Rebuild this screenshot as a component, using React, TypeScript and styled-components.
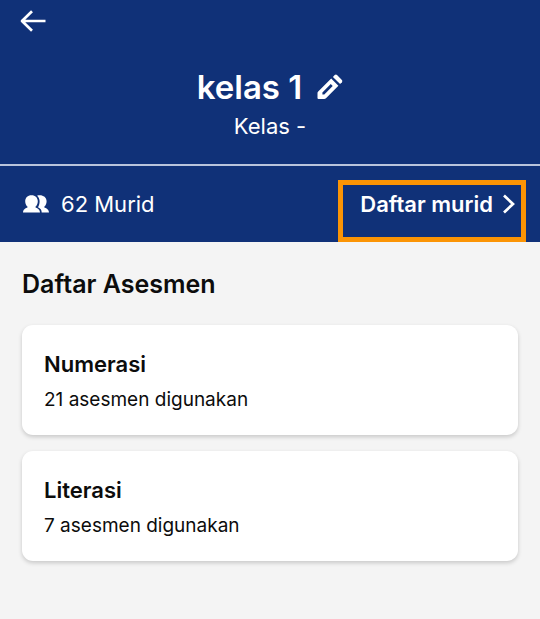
import React from "react";
import styled, { createGlobalStyle } from "styled-components";

const GlobalStyle = createGlobalStyle`
  *, *::before, *::after { box-sizing: border-box; }
  body {
    margin: 0;
    background: #f4f4f4;
    color: #0c0c0c;
    font-family: Inter, "Liberation Sans", sans-serif;
  }
`;

const Header = styled.header`
  background: #103178;
  color: #fff;
`;

const TopBar = styled.nav`
  display: flex;
  padding: 8px 20px 0;
`;

const IconButton = styled.button`
  display: flex;
  padding: 0;
  border: 0;
  background: none;
  color: inherit;
  cursor: pointer;
`;

const ClassInfo = styled.div`
  display: flex;
  flex-direction: column;
  align-items: center;
  padding: 33px 20px 24px;
  border-bottom: 2px solid #b9c4dc;
`;

const TitleRow = styled.div`
  display: flex;
  align-items: center;
  gap: 15px;
`;

const Title = styled.h1`
  margin: 0;
  font-size: 33px;
  font-weight: 600;
  line-height: 40px;
`;

const Subtitle = styled.p`
  margin: 5px 0 0;
  font-size: 22px;
  line-height: 28px;
`;

const StatsBar = styled.div`
  display: flex;
  align-items: flex-start;
  justify-content: space-between;
  padding: 14px 14px 0 23px;
`;

const StudentCount = styled.div`
  display: flex;
  align-items: center;
  gap: 12px;
  padding-top: 10px;
  font-size: 22px;
  line-height: 28px;
`;

const StudentLink = styled.a`
  display: flex;
  align-items: center;
  gap: 9px;
  padding: 5px 6px 19px 17px;
  border: 5px solid #fb9405;
  color: inherit;
  font-size: 22px;
  font-weight: 600;
  line-height: 28px;
  text-decoration: none;
`;

const Main = styled.main`
  padding: 26px 22px;
`;

const SectionTitle = styled.h2`
  margin: 0 0 25px;
  font-size: 25px;
  font-weight: 600;
  line-height: 32px;
`;

const CardList = styled.div`
  display: grid;
  gap: 16px;
`;

const Card = styled.section`
  padding: 24px 22px 22px;
  border-radius: 11px;
  background: #fff;
  box-shadow: 0 2px 4px rgba(0, 0, 0, 0.18);
`;

const CardTitle = styled.h3`
  margin: 0 0 8px;
  font-size: 22px;
  font-weight: 600;
  line-height: 30px;
`;

const CardText = styled.p`
  margin: 0;
  font-size: 19px;
  line-height: 26px;
`;

const BackIcon = () => (
  <svg width="26" height="26" viewBox="0 0 26 26" fill="none" stroke="currentColor" strokeWidth="2.7" strokeLinejoin="round" aria-hidden="true">
    <path d="M25.5 13H2M12 3.2 2 13l10 9.8" />
  </svg>
);

const PencilIcon = () => (
  <svg width="26" height="26" viewBox="0 0 26 26" fill="currentColor" aria-hidden="true">
    <path
      fillRule="evenodd"
      d="M14.200 4.600 21.400 11.800 9 24.200Q8.200 25 7.200 25H1.500Q.5 25 .5 24V18.800Q.5 18 1.200 17.400ZM13.800 10.100 5.400 18.500V20.400H7.300L15.700 12Z"
    />
    <path d="M15.900 2.900 17.700 1.100Q18.900.1 20 1.100L24.900 6Q25.900 7.100 24.900 8.300L23.100 10.100Z" />
  </svg>
);

const PeopleIcon = () => (
  <svg width="26" height="18" viewBox="0 0 26 18" fill="currentColor" aria-hidden="true">
    <path d="M8.500.3c3.900 0 6.300 2.600 6.300 6 0 2.500-1 4.500-2.600 5.700.3 1 4.800 1.300 4.800 5.600H0c0-4.300 4.500-4.600 4.800-5.600-1.600-1.200-2.600-3.200-2.600-5.700 0-3.400 2.400-6 6.300-6Z" />
    <path d="M14 .7c5-1.300 9.600 1 9.600 5.600 0 2.500-1 4.500-2.600 5.700.3 1 5 1.300 5 5.600h-7.300c0-2.700-1.300-4.300-3.700-5.400 1-1.400 1.600-3.500 1.600-5.900 0-2.400-.9-4.300-2.600-5.600Z" />
  </svg>
);

const ChevronIcon = () => (
  <svg width="13" height="20" viewBox="0 0 13 20" fill="none" stroke="currentColor" strokeWidth="2.7" aria-hidden="true">
    <path d="M2 1.5 11 10l-9 8.5" />
  </svg>
);

const assessments = [
  { name: "Numerasi", used: 21 },
  { name: "Literasi", used: 7 },
];

export default function App() {
  return (
    <>
      <GlobalStyle />
      <Header>
        <TopBar>
          <IconButton type="button" aria-label="Kembali">
            <BackIcon />
          </IconButton>
        </TopBar>
        <ClassInfo>
          <TitleRow>
            <Title>kelas 1</Title>
            <IconButton type="button" aria-label="Ubah nama kelas">
              <PencilIcon />
            </IconButton>
          </TitleRow>
          <Subtitle>Kelas -</Subtitle>
        </ClassInfo>
        <StatsBar>
          <StudentCount>
            <PeopleIcon />
            <span>62 Murid</span>
          </StudentCount>
          <StudentLink href="#murid">
            <span>Daftar murid</span>
            <ChevronIcon />
          </StudentLink>
        </StatsBar>
      </Header>
      <Main>
        <SectionTitle>Daftar Asesmen</SectionTitle>
        <CardList>
          {assessments.map(({ name, used }) => (
            <Card key={name}>
              <CardTitle>{name}</CardTitle>
              <CardText>{used} asesmen digunakan</CardText>
            </Card>
          ))}
        </CardList>
      </Main>
    </>
  );
}
